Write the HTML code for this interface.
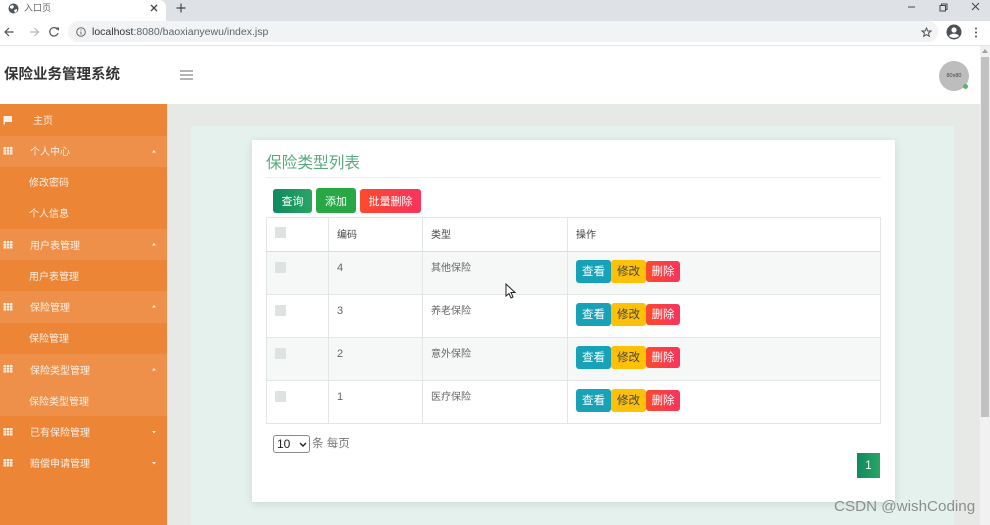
<!DOCTYPE html>
<html lang="zh">
<head>
<meta charset="utf-8">
<title>入口页</title>
<style>
*{box-sizing:border-box}
html,body{margin:0;padding:0;width:990px;height:525px;overflow:hidden;background:#fff;font-family:"Liberation Sans","Noto Sans CJK SC",sans-serif}
.a{position:absolute}
#page{position:relative;width:990px;height:525px;overflow:hidden;filter:blur(.3px)}
.nav{position:absolute;left:0;width:167px;color:#fdf1e6;font-size:10px;line-height:12px}
.nav span{position:absolute;white-space:nowrap;margin-top:2px}
.lt{background:#ee8f4a}
.dk{background:#ec8535}
.btn{position:absolute;border-radius:3px;color:#fff;font-size:11.5px;text-align:center;white-space:nowrap}
.tool{font-size:11px}
.cell{position:absolute;font-size:10px;color:#666;white-space:nowrap;line-height:12px}
.cb{position:absolute;left:275px;width:11px;height:11px;background:#dfe2e3;border-radius:1px}
.hl{position:absolute;left:266px;width:615px;height:1px;background:#e3e6e6}
.vl{position:absolute;top:217px;width:1px;height:207px;background:#e3e6e6}
</style>
</head>
<body>
<div id="page">
  <!-- browser chrome -->
  <div class="a" style="left:0;top:0;width:990px;height:21px;background:#dee1e6"></div>
  <div class="a" style="left:0;top:0;width:166px;height:21px;background:#fff;border-top-right-radius:7px"></div>
  <svg class="a" style="left:8px;top:3px" width="11" height="11" viewBox="0 0 11 11"><circle cx="5.5" cy="5.5" r="5" fill="#50565c"/><path d="M2 3l3-1 1 2-2 2-2-1zM6 7l3-1 0 2-2 2z" fill="#fff"/></svg>
  <div class="a" style="left:24px;top:2px;font-size:9px;line-height:12px;color:#666">入口页</div>
  <svg class="a" style="left:150px;top:4px" width="8" height="8" viewBox="0 0 8 8"><path d="M1 1l6 6M7 1L1 7" stroke="#444" stroke-width="1.3"/></svg>
  <svg class="a" style="left:176px;top:3px" width="10" height="10" viewBox="0 0 10 10"><path d="M5 0.5v9M0.5 5h9" stroke="#444" stroke-width="1.2"/></svg>
  <svg class="a" style="left:905px;top:2px" width="80" height="12" viewBox="0 0 80 12"><path d="M3 5h7" stroke="#444" stroke-width="1"/><path d="M35 3.5h5.5V9H35zM36.500 3.500V2H42v5.500h-1.500" fill="none" stroke="#444" stroke-width="1"/><path d="M67 1l7 7M74 1l-7 7" stroke="#444" stroke-width="1"/></svg>
  <div class="a" style="left:0;top:21px;width:990px;height:24px;background:#fff"></div>
  <svg class="a" style="left:3px;top:26px" width="60" height="12" viewBox="0 0 60 12"><path d="M10.5 6H2M6 2L2 6l4 4" fill="none" stroke="#555" stroke-width="1.2"/><path d="M27 6h8.5M31.500 2l4 4-4 4" fill="none" stroke="#b5b8ba" stroke-width="1.2"/><path d="M54.500 3.500A4.200 4.200 0 1 0 55 7" fill="none" stroke="#555" stroke-width="1.2"/><path d="M52.500 1.500H56V5z" fill="#555"/></svg>
  <div class="a" style="left:68px;top:21px;width:870px;height:21px;border-radius:10px;background:#f1f3f4"></div>
  <svg class="a" style="left:76px;top:27px" width="10" height="10" viewBox="0 0 10 10"><circle cx="5" cy="5" r="4.3" fill="none" stroke="#666" stroke-width="1"/><path d="M5 4.500v3M5 2.500v1" stroke="#666" stroke-width="1"/></svg>
  <div class="a" style="left:92px;top:25px;font-size:10.5px;line-height:14px;color:#5f6368;white-space:nowrap"><span style="color:#333">localhost</span>:8080/baoxianyewu/index.jsp</div>
  <svg class="a" style="left:921px;top:27px" width="11" height="11" viewBox="0 0 11 11"><path d="M5.500 1l1.300 3H10L7.500 6.100l.8 3.200-2.800-1.700-2.800 1.700.8-3.200L1 4h3.200z" fill="none" stroke="#555" stroke-width="1"/></svg>
  <svg class="a" style="left:946px;top:24px" width="16" height="16" viewBox="0 0 16 16"><circle cx="8" cy="8" r="7.5" fill="#4d5156"/><circle cx="8" cy="6" r="2.600" fill="#fff"/><path d="M3 12c1.500-3 8.500-3 10 0-2.500 2.500-7.500 2.500-10 0z" fill="#fff"/></svg>
  <svg class="a" style="left:974px;top:27px" width="4" height="11" viewBox="0 0 4 11"><circle cx="2" cy="1.500" r="1" fill="#555"/><circle cx="2" cy="5.500" r="1" fill="#555"/><circle cx="2" cy="9.500" r="1" fill="#555"/></svg>
  <div class="a" style="left:0;top:45px;width:990px;height:1px;background:#e2e4e6"></div>

  <!-- header -->
  <div class="a" style="left:0;top:46px;width:980px;height:58px;background:#fefffe"></div>
  <div class="a" style="left:4px;top:66px;font-size:14.5px;line-height:18px;font-weight:bold;color:#333;white-space:nowrap">保险业务管理系统</div>
  <svg class="a" style="left:180px;top:70px" width="13" height="10" viewBox="0 0 13 10"><path d="M0 1h13M0 5h13M0 9h13" stroke="#888" stroke-width="1.300"/></svg>
  <div class="a" style="left:939px;top:61px;width:30px;height:30px;border-radius:50%;background:#bdbdbd;color:#444;font-size:5.5px;line-height:30px;text-align:center">80x80</div>
  <div class="a" style="left:963px;top:84px;width:5px;height:5px;border-radius:50%;background:#5cb46a"></div>

  <!-- content backgrounds -->
  <div class="a" style="left:167px;top:104px;width:813px;height:421px;background:#e6e9e6"></div>
  <div class="a" style="left:191px;top:126px;width:763px;height:399px;background:#e4f1ec"></div>
  <div class="a" style="left:252px;top:140px;width:643px;height:362px;background:#fefffe;box-shadow:0 2px 8px rgba(0,0,0,.1)"></div>

  <!-- scrollbar -->
  <div class="a" style="left:980px;top:46px;width:10px;height:479px;background:#f1f1f1"></div>
  <div class="a" style="left:981px;top:57px;width:8px;height:360px;background:#c1c1c1"></div>
  <svg class="a" style="left:982px;top:49px" width="6" height="4" viewBox="0 0 6 4"><path d="M3 0l3 4H0z" fill="#a0a0a0"/></svg>

  <!-- sidebar -->
  <div class="a dk" style="left:0;top:104px;width:167px;height:421px"></div>
  <div class="nav dk" style="top:104px;height:32px"><span style="left:33px;top:10px">主页</span></div>
  <div class="nav lt" style="top:136px;height:31px"><span style="left:30px;top:9px">个人中心</span></div>
  <div class="nav dk" style="top:167px;height:31px"><span style="left:29px;top:9px">修改密码</span></div>
  <div class="nav dk" style="top:198px;height:31px"><span style="left:29px;top:9px">个人信息</span></div>
  <div class="nav lt" style="top:229px;height:31px"><span style="left:30px;top:10px">用户表管理</span></div>
  <div class="nav dk" style="top:260px;height:31px"><span style="left:29px;top:10px">用户表管理</span></div>
  <div class="nav lt" style="top:291px;height:32px"><span style="left:30px;top:10px">保险管理</span></div>
  <div class="nav dk" style="top:323px;height:31px"><span style="left:29px;top:9px">保险管理</span></div>
  <div class="nav lt" style="top:354px;height:31px"><span style="left:30px;top:10px">保险类型管理</span></div>
  <div class="nav lt" style="top:385px;height:31px"><span style="left:29px;top:10px">保险类型管理</span></div>
  <div class="nav dk" style="top:416px;height:31px"><span style="left:30px;top:10px">已有保险管理</span></div>
  <div class="nav dk" style="top:447px;height:31px"><span style="left:30px;top:10px">赔偿申请管理</span></div>
  <svg class="a" style="left:0;top:104px" width="167" height="375" viewBox="0 0 167 375">
    <defs>
      <g id="tb"><path d="M0 0h9v7.500H0z" fill="#fdf1e6"/><path d="M0 2.500h9M0 5h9M3 0V7.500M6 0V7.500" stroke="#ec8535" stroke-width=".6"/></g>
      <path id="up" d="M0 2.500L2 0l2 2.500z" fill="#fdf1e6"/>
      <path id="dn" d="M0 0l2 2.500L4 0z" fill="#fdf1e6"/>
    </defs>
    <path d="M3.500 12h1.500v8.500H3.500z" fill="#fdf1e6"/>
    <path d="M3.500 12h8.500v6H3.500z" fill="#fdf1e6"/>
    <use href="#tb" x="3.500" y="43"/>
    <use href="#tb" x="3.500" y="137"/>
    <use href="#tb" x="3.500" y="199"/>
    <use href="#tb" x="3.500" y="261"/>
    <use href="#tb" x="3.500" y="324"/>
    <use href="#tb" x="3.500" y="355"/>
    <use href="#up" x="152" y="46"/>
    <use href="#up" x="152" y="139"/>
    <use href="#up" x="152" y="201"/>
    <use href="#up" x="152" y="264"/>
    <use href="#dn" x="152" y="327"/>
    <use href="#dn" x="152" y="358"/>
  </svg>

  <!-- card title -->
  <div class="a" style="left:266px;top:154px;font-size:15.7px;line-height:20px;color:#58ab7c;white-space:nowrap">保险类型列表</div>
  <div class="a" style="left:266px;top:177px;width:615px;height:1px;background:#eef0ef"></div>

  <!-- toolbar -->
  <div class="btn tool" style="left:273px;top:189px;width:39px;height:24px;line-height:26px;background:linear-gradient(90deg,#0f8a5f,#2aa565)">查询</div>
  <div class="btn tool" style="left:316px;top:188px;width:40px;height:25px;line-height:28px;background:#28a745">添加</div>
  <div class="btn tool" style="left:360px;top:189px;width:61px;height:24px;line-height:26px;background:linear-gradient(90deg,#fc4a2c,#f9335f)">批量删除</div>

  <!-- table -->
  <div class="a" style="left:266px;top:251px;width:615px;height:43px;background:#f6f7f7"></div>
  <div class="a" style="left:266px;top:337px;width:615px;height:43px;background:#f6f7f7"></div>
  <div class="hl" style="top:217px"></div>
  <div class="hl" style="top:251px;background:#dadddd"></div>
  <div class="hl" style="top:294px"></div>
  <div class="hl" style="top:337px"></div>
  <div class="hl" style="top:380px"></div>
  <div class="hl" style="top:423px"></div>
  <div class="vl" style="left:266px"></div>
  <div class="vl" style="left:328px"></div>
  <div class="vl" style="left:422px"></div>
  <div class="vl" style="left:567px"></div>
  <div class="vl" style="left:880px"></div>

  <div class="cb" style="top:227px"></div>
  <div class="cell" style="left:337px;top:230px;color:#444">编码</div>
  <div class="cell" style="left:431px;top:230px;color:#444">类型</div>
  <div class="cell" style="left:576px;top:230px;color:#444">操作</div>

  <div class="cb" style="top:262px"></div>
  <div class="cell" style="left:337px;top:262px;font-size:11px">4</div>
  <div class="cell" style="left:431px;top:263px">其他保险</div>
  <div class="btn" style="left:576px;top:260px;width:35px;height:23px;line-height:25px;background:#17a2b8">查看</div>
  <div class="btn" style="left:611px;top:260px;width:35px;height:23px;line-height:25px;background:#ffc107;color:#444">修改</div>
  <div class="btn" style="left:646px;top:261px;width:34px;height:21px;line-height:23px;background:linear-gradient(90deg,#fc4a2c,#f9335f)">删除</div>

  <div class="cb" style="top:305px"></div>
  <div class="cell" style="left:337px;top:305px;font-size:11px">3</div>
  <div class="cell" style="left:431px;top:306px">养老保险</div>
  <div class="btn" style="left:576px;top:303px;width:35px;height:23px;line-height:25px;background:#17a2b8">查看</div>
  <div class="btn" style="left:611px;top:303px;width:35px;height:23px;line-height:25px;background:#ffc107;color:#444">修改</div>
  <div class="btn" style="left:646px;top:304px;width:34px;height:21px;line-height:23px;background:linear-gradient(90deg,#fc4a2c,#f9335f)">删除</div>

  <div class="cb" style="top:348px"></div>
  <div class="cell" style="left:337px;top:348px;font-size:11px">2</div>
  <div class="cell" style="left:431px;top:349px">意外保险</div>
  <div class="btn" style="left:576px;top:346px;width:35px;height:23px;line-height:25px;background:#17a2b8">查看</div>
  <div class="btn" style="left:611px;top:346px;width:35px;height:23px;line-height:25px;background:#ffc107;color:#444">修改</div>
  <div class="btn" style="left:646px;top:347px;width:34px;height:21px;line-height:23px;background:linear-gradient(90deg,#fc4a2c,#f9335f)">删除</div>

  <div class="cb" style="top:391px"></div>
  <div class="cell" style="left:337px;top:391px;font-size:11px">1</div>
  <div class="cell" style="left:431px;top:392px">医疗保险</div>
  <div class="btn" style="left:576px;top:389px;width:35px;height:23px;line-height:25px;background:#17a2b8">查看</div>
  <div class="btn" style="left:611px;top:389px;width:35px;height:23px;line-height:25px;background:#ffc107;color:#444">修改</div>
  <div class="btn" style="left:646px;top:390px;width:34px;height:21px;line-height:23px;background:linear-gradient(90deg,#fc4a2c,#f9335f)">删除</div>

  <!-- cursor -->
  <svg class="a" style="left:505px;top:283px" width="11" height="16" viewBox="0 0 11 16"><path d="M1 1v12l3-2.500 2 4.500 2-1-2-4.500h4z" fill="#fff" stroke="#222" stroke-width="1"/></svg>

  <!-- footer -->
  <div class="a" style="left:273px;top:435px;width:37px;height:18px;border:1px solid #8a8a8a;border-radius:3px;background:#fff;font-size:12px;line-height:16px;padding-left:3px;color:#222">10</div>
  <svg class="a" style="left:299px;top:442px" width="8" height="5" viewBox="0 0 8 5"><path d="M1 1l3 3 3-3" fill="none" stroke="#222" stroke-width="1.400"/></svg>
  <div class="a" style="left:312px;top:437px;font-size:11.5px;line-height:14px;color:#777;white-space:nowrap">条 每页</div>
  <div class="a" style="left:857px;top:453px;width:23px;height:25px;background:linear-gradient(90deg,#0f8a5f,#2aa565);color:#fff;font-size:11.5px;line-height:26px;text-align:center">1</div>

  <!-- watermark -->
  <div class="a" style="left:834px;top:497px;font-size:15.2px;line-height:20px;color:#8b8f8e;white-space:nowrap">CSDN @wishCoding</div>
</div>
</body>
</html>
